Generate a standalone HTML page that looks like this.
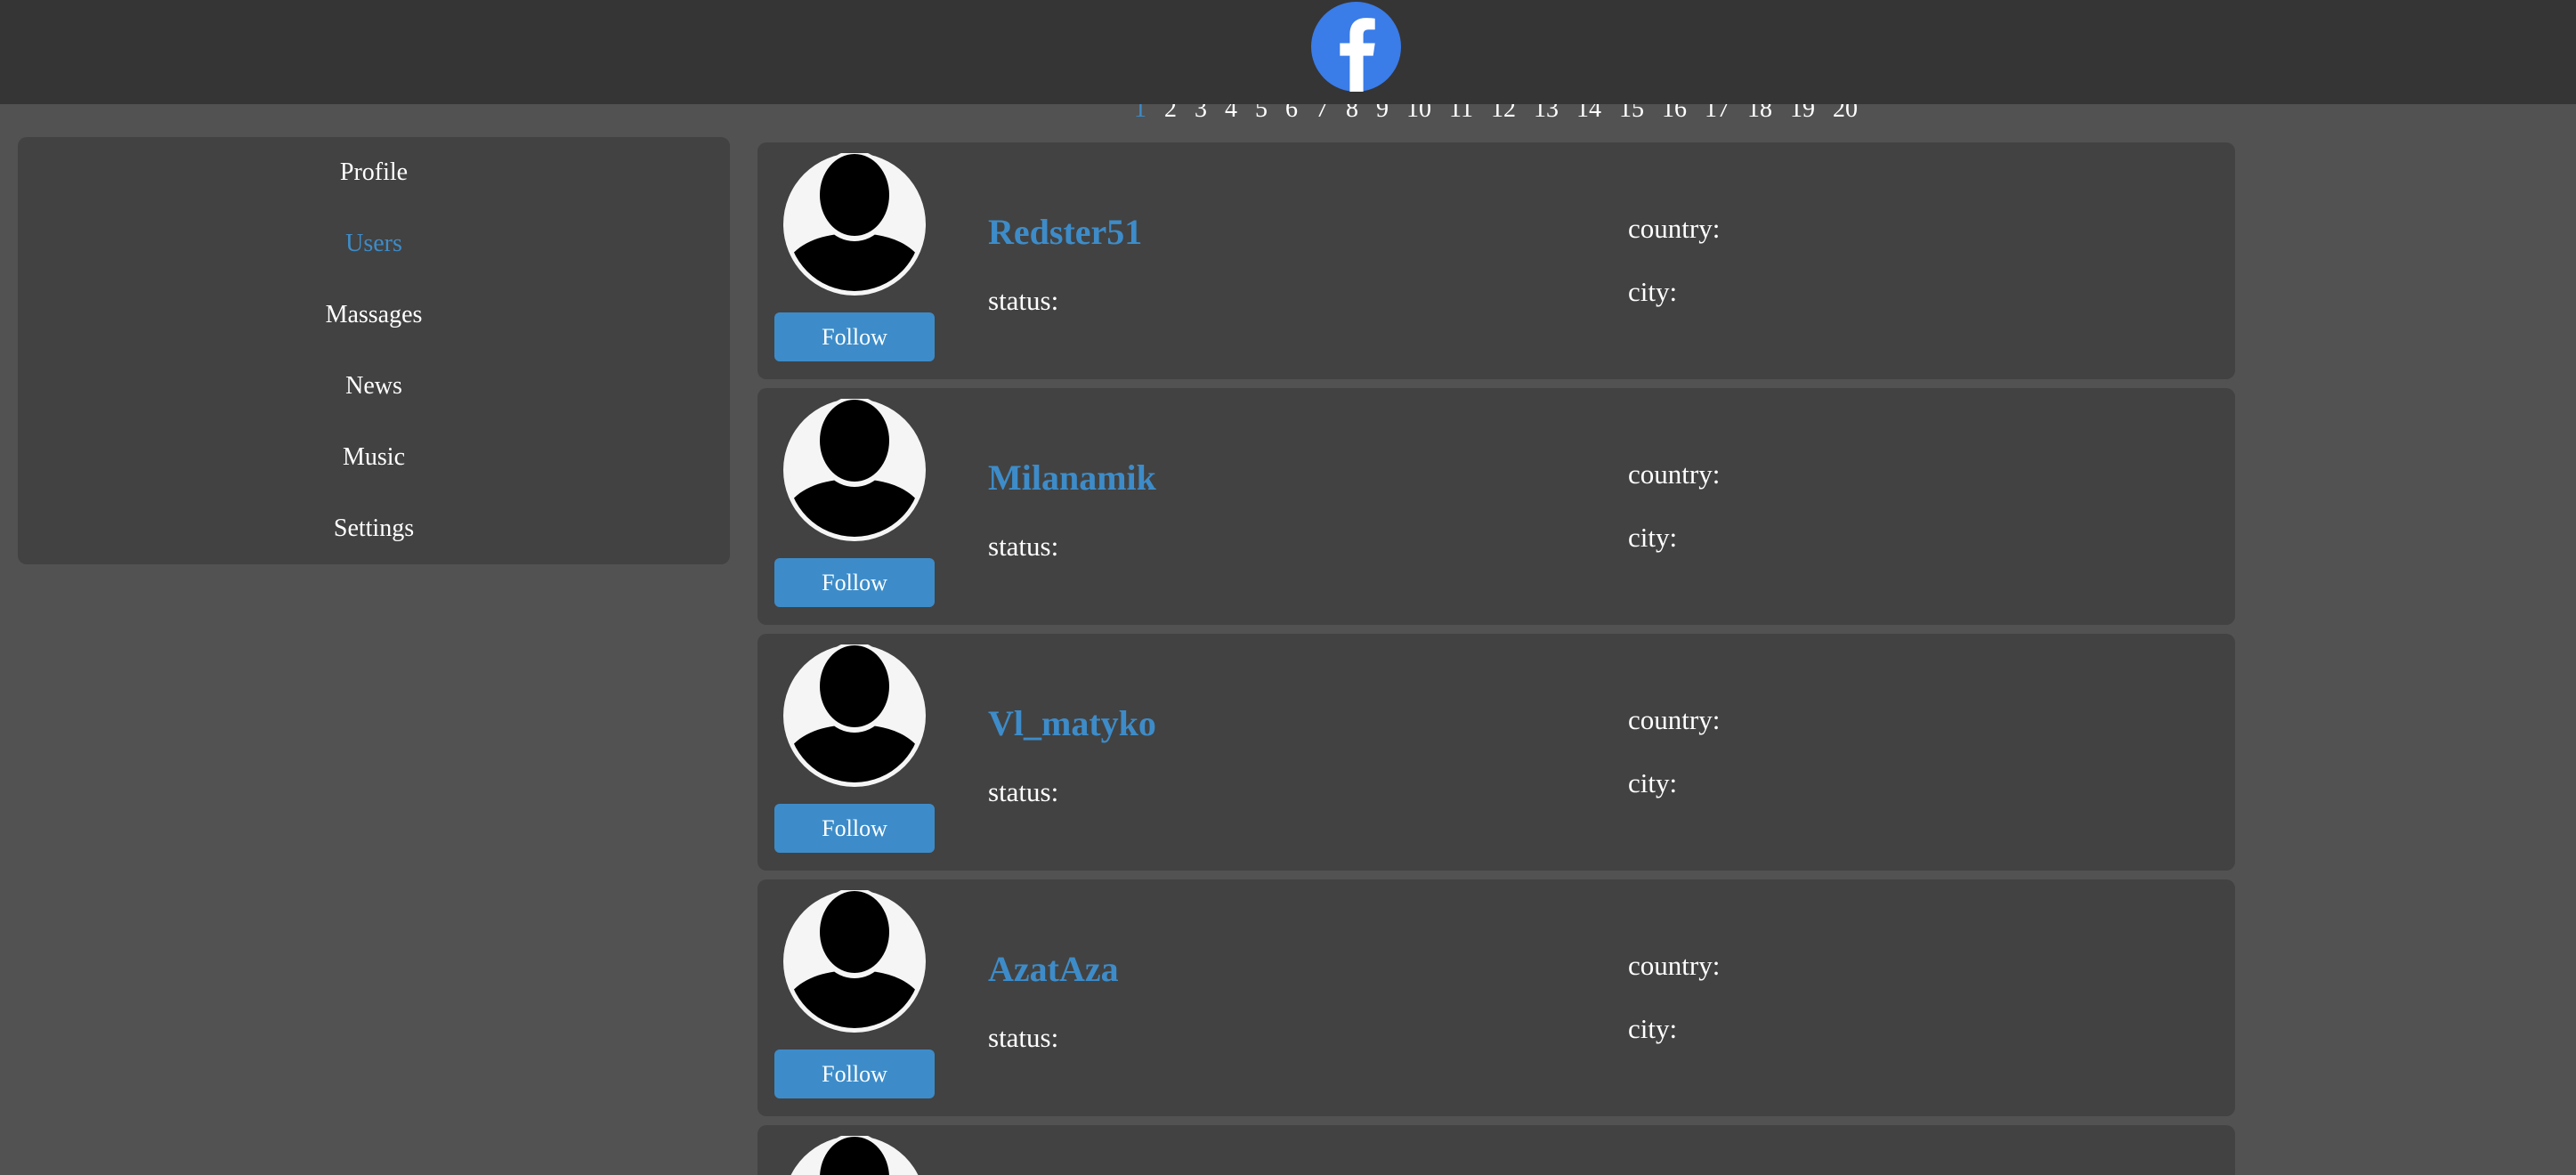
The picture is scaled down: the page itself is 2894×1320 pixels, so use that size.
<!DOCTYPE html>
<html><head><meta charset="utf-8"><style>
*{margin:0;padding:0;box-sizing:border-box}
html,body{width:2894px;height:1320px;overflow:hidden;background:#525252;font-family:"Liberation Serif",serif;color:#fff}
.wrap{position:relative;width:2894px;height:1320px;overflow:hidden}
.hdr{position:absolute;left:0;top:0;width:2894px;height:117px;background:#353535;z-index:2}
.logo{position:absolute;left:1473px;top:2px}
.pag{position:absolute;left:1274px;top:105px;font-size:28px;line-height:36px;white-space:nowrap;z-index:1}
.pag span{margin-right:20px}
.side{position:absolute;left:20px;top:154px;width:800px;height:480px;background:#424242;border-radius:10px}
.side div{position:absolute;left:0;width:100%;text-align:center;font-size:28px;line-height:32px}
.card{position:absolute;left:851px;width:1660px;height:266px;background:#424242;border-radius:10px}
.av{position:absolute;left:29px;top:12px}
.btn{position:absolute;left:19px;top:191px;width:180px;height:55px;background:#3d8cc9;border-radius:6px;text-align:center;font-size:26px;line-height:55px}
.nm{position:absolute;left:259px;top:77px;font-size:40px;font-weight:bold;color:#3d8cc9;line-height:48px}
.st{position:absolute;left:259px;top:160px;font-size:31px;line-height:36px}
.co{position:absolute;left:978px;top:79px;font-size:31px;line-height:36px}
.ci{position:absolute;left:978px;top:150px;font-size:31px;line-height:36px}
</style></head><body><div class="wrap">
<div class="hdr"><svg class="logo" width="101" height="101" viewBox="0 0 100 100"><circle cx="50" cy="50" r="50" fill="#3a7ce8"/><path d="M43 100V60H32V46H43V36C43 24 50 18 61 18c5 0 9 .5 10 .7V31h-7c-5 0-6 2.5-6 6v9h13l-2 14H58v40z" fill="#fff"/></svg></div>
<div class="pag"><span style="color:#3d8cc9">1</span><span>2</span><span>3</span><span>4</span><span>5</span><span>6</span><span>7</span><span>8</span><span>9</span><span>10</span><span>11</span><span>12</span><span>13</span><span>14</span><span>15</span><span>16</span><span>17</span><span>18</span><span>19</span><span>20</span></div>
<div class="side">
<div style="top:24px">Profile</div>
<div style="top:104px;color:#3d8cc9">Users</div>
<div style="top:184px">Massages</div>
<div style="top:264px">News</div>
<div style="top:344px">Music</div>
<div style="top:424px">Settings</div>
</div>
<svg width="0" height="0" style="position:absolute"><defs><clipPath id="cc"><circle cx="80" cy="80" r="75"/></clipPath>
<g id="avt"><circle cx="80" cy="80" r="80" fill="#f5f5f5"/><g clip-path="url(#cc)"><path d="M2 125 C15 100 45 90 80 90 C115 90 145 100 158 125 L158 170 L2 170Z" fill="#000"/></g><ellipse cx="80" cy="48" rx="44" ry="51" fill="#f5f5f5"/><ellipse cx="80" cy="47" rx="39" ry="46" fill="#000"/></g></defs></svg>
<div class="card" style="top:160px"><svg class="av" width="160" height="160"><use href="#avt"/></svg><div class="btn">Follow</div><div class="nm">Redster51</div><div class="st">status:</div><div class="co">country:</div><div class="ci">city:</div></div>
<div class="card" style="top:436px"><svg class="av" width="160" height="160"><use href="#avt"/></svg><div class="btn">Follow</div><div class="nm">Milanamik</div><div class="st">status:</div><div class="co">country:</div><div class="ci">city:</div></div>
<div class="card" style="top:712px"><svg class="av" width="160" height="160"><use href="#avt"/></svg><div class="btn">Follow</div><div class="nm">Vl_matyko</div><div class="st">status:</div><div class="co">country:</div><div class="ci">city:</div></div>
<div class="card" style="top:988px"><svg class="av" width="160" height="160"><use href="#avt"/></svg><div class="btn">Follow</div><div class="nm">AzatAza</div><div class="st">status:</div><div class="co">country:</div><div class="ci">city:</div></div>
<div class="card" style="top:1264px;height:56px;border-radius:10px 10px 0 0;overflow:hidden"><svg class="av" width="160" height="44" viewBox="0 0 160 44"><use href="#avt"/></svg></div>
</div></body></html>
